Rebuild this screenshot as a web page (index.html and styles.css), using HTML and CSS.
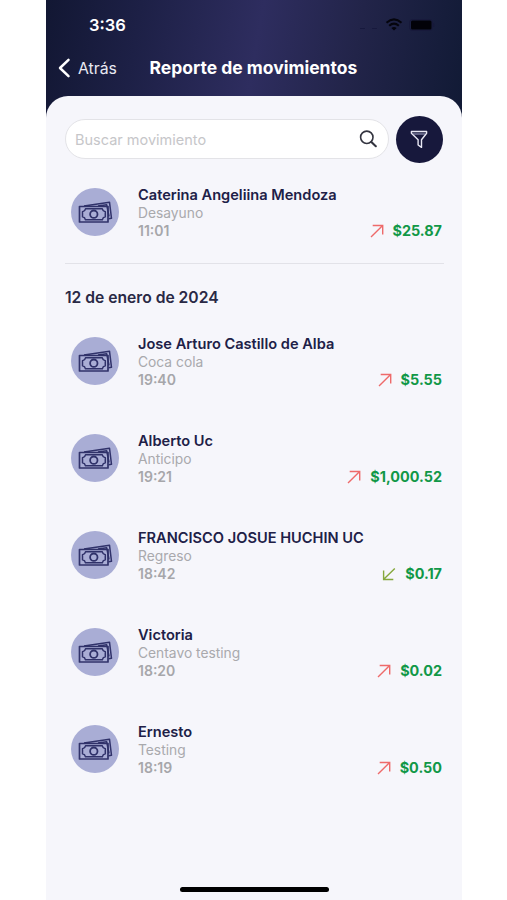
FILE: index.html
```
<!DOCTYPE html>
<html lang="es">
<head>
<meta charset="utf-8">
<title>Reporte de movimientos</title>
<link rel="stylesheet" href="styles.css">
</head>
<body>
<svg class="symbols" aria-hidden="true">
  <symbol id="cash" viewBox="0 0 48 48">
    <g fill="none" stroke="#30326a" stroke-width="1.5" stroke-linejoin="round">
      <path d="M13 18 38.5 14.2 40.5 30.3 37.5 30.8M27 18 35.7 16.8 38 28.5"/>
      <rect x="8.5" y="18.5" width="28.5" height="15.5" stroke-width="1.7"/>
      <path d="M14.5 20.8h16.8q.5 2.5 3 3v5q-2.5.5-3 3H14.5q-.5-2.5-3-3v-5q2.5-.5 3-3z"/>
      <circle cx="22.8" cy="26.2" r="3.7" stroke-width="1.8"/>
    </g>
  </symbol>
  <symbol id="out" viewBox="0 0 14 14"><path d="M1 13 12.4 1.7M2.7 1.5h10v9" fill="none" stroke="#ee6a6a" stroke-width="1.4"/></symbol>
  <symbol id="in" viewBox="0 0 14 14"><path d="M12.8 1.5 2 12M1.6 3.5v9h9.7" fill="none" stroke="#85a83c" stroke-width="1.4"/></symbol>
</svg>
<div class="phone">
  <header class="header">
    <div class="status">
      <span class="clock">3:36</span>
      <div class="indicators">
        <span class="dots"><i></i><i></i></span>
        <svg width="18" height="13" viewBox="0 0 18 13"><g fill="none" stroke="#05050d" stroke-width="2.1"><path d="M1.5 4.7q7.5-6.5 15 0M4.2 7.7q4.8-4 9.6 0"/></g><path d="M9 12.5 6.4 9.9q2.6-2 5.2 0z" fill="#05050d"/></svg>
        <svg width="26" height="12" viewBox="0 0 26 12"><rect x=".5" y=".5" width="23" height="11" rx="3" fill="none" stroke="#17193b"/><rect x="2" y="1.5" width="20.5" height="9" rx="1.5" fill="#020208"/><path d="M24.7 4v4" stroke="#17193b"/></svg>
      </div>
    </div>
    <nav class="nav">
      <svg width="13" height="20" viewBox="0 0 13 20"><path d="M10.5 1.8 2 10 10.5 18.2" fill="none" stroke="#fff" stroke-width="2.5" stroke-linecap="round" stroke-linejoin="round"/></svg>
      <span class="back">Atrás</span>
      <h1 class="title">Reporte de movimientos</h1>
    </nav>
  </header>
  <main class="sheet">
    <div class="tools">
      <div class="search"><span>Buscar movimiento</span>
        <svg width="18" height="18" viewBox="0 0 18 18"><g fill="none" stroke="#33343f"><circle cx="7.8" cy="7.3" r="6.2" stroke-width="1.6"/><path d="m12.4 12 4.4 4.2" stroke-width="2.1" stroke-linecap="round"/></g></svg>
      </div>
      <div class="filter"><svg width="18" height="19" viewBox="0 0 18 19"><path d="M1.4 1.5h15.2v1.8l-5.1 6.5v7.6l-3.4-2.4v-5.2L1.4 3.3z" fill="none" stroke="#e8e8f4" stroke-width="1.4" stroke-linejoin="round"/><path d="M3 4h12" stroke="#a9aaca"/></svg></div>
    </div>
    <section class="today">
      <article class="row"><svg class="avatar"><use href="#cash"/></svg><div class="info"><b>Caterina Angeliina Mendoza</b><span>Desayuno</span><div class="line"><time>11:01</time><svg class="arrow"><use href="#out"/></svg><strong>$25.87</strong></div></div></article>
    </section>
    <h2 class="date">12 de enero de 2024</h2>
    <section class="list">
      <article class="row"><svg class="avatar"><use href="#cash"/></svg><div class="info"><b>Jose Arturo Castillo de Alba</b><span>Coca cola</span><div class="line"><time>19:40</time><svg class="arrow"><use href="#out"/></svg><strong>$5.55</strong></div></div></article>
      <article class="row"><svg class="avatar"><use href="#cash"/></svg><div class="info"><b>Alberto Uc</b><span>Anticipo</span><div class="line"><time>19:21</time><svg class="arrow"><use href="#out"/></svg><strong>$1,000.52</strong></div></div></article>
      <article class="row"><svg class="avatar"><use href="#cash"/></svg><div class="info"><b>FRANCISCO JOSUE HUCHIN UC</b><span>Regreso</span><div class="line"><time>18:42</time><svg class="arrow"><use href="#in"/></svg><strong>$0.17</strong></div></div></article>
      <article class="row"><svg class="avatar"><use href="#cash"/></svg><div class="info"><b>Victoria</b><span>Centavo testing</span><div class="line"><time>18:20</time><svg class="arrow"><use href="#out"/></svg><strong>$0.02</strong></div></div></article>
      <article class="row"><svg class="avatar"><use href="#cash"/></svg><div class="info"><b>Ernesto</b><span>Testing</span><div class="line"><time>18:19</time><svg class="arrow"><use href="#out"/></svg><strong>$0.50</strong></div></div></article>
    </section>
    <div class="home"></div>
  </main>
</div>
</body>
</html>
```
FILE: styles.css
```
* { box-sizing: border-box; }
body { margin: 0; background: #fff; font-family: Inter, "Liberation Sans", sans-serif; }
svg { display: block; flex: none; }
.symbols { position: absolute; width: 0; height: 0; }
.phone {
  width: 416px; height: 900px; margin-left: 46px; overflow: hidden;
  display: flex; flex-direction: column;
  background: linear-gradient(100deg, #121733 0%, #1d2046 22%, #2e2d5f 50%, #222449 73%, #111a35 100%) 0 0 / 100% 118px no-repeat, #f9f9fc;
}
.header { height: 96px; flex: none; }
.status { height: 48px; padding: 1px 27px 0 43px; display: flex; align-items: center; justify-content: space-between; color: #fff; }
.clock { font-size: 16.5px; font-weight: 600; line-height: 20px; }
.indicators { display: flex; align-items: center; gap: 6px; }
.dots { display: flex; gap: 7px; margin: 8px 2px 0 0; }
.dots i { width: 5px; height: 1px; background: #17193d; }
.nav { height: 40px; padding-left: 12px; display: flex; align-items: center; color: #fff; }
.back { margin-left: 7px; padding-top: 1px; width: 71.5px; font-size: 15.8px; line-height: 20px; color: #e9e9f3; }
.title { margin: 0; font-size: 17.5px; line-height: 20px; font-weight: 700; white-space: nowrap; }
.sheet { flex: 1; display: flex; flex-direction: column; background: #f6f6fb; border-radius: 22px 22px 0 0; padding: 19px 17px 8px 19px; }
.tools { display: flex; align-items: center; justify-content: space-between; height: 48px; }
.search { width: 324px; height: 40px; border: 1px solid #e3e3e7; border-radius: 20px; background: #fff; display: flex; align-items: center; justify-content: space-between; padding: 0 11px 0 9px; font-size: 14.5px; color: #c6c6c9; }
.filter { width: 47px; height: 47px; margin-right: 2px; padding-right: 1px; border-radius: 50%; background: #17183c; display: flex; align-items: center; justify-content: center; }
.today { height: 101px; margin-right: 1px; padding-top: 22px; border-bottom: 1px solid #e2e2e8; }
.row { display: flex; align-items: center; height: 54px; padding: 0 2px 0 6px; }
.avatar { width: 48px; height: 48px; border-radius: 50%; background: #a9add5; }
.info { flex: 1; margin-left: 19px; display: flex; flex-direction: column; }
.info b { font-size: 14.6px; font-weight: 600; line-height: 20px; color: #202047; white-space: nowrap; }
.info span { font-size: 13.8px; line-height: 17px; color: #a9a9ad; }
.line { display: flex; align-items: center; height: 17px; }
.line time { flex: 1; font-size: 14px; font-weight: 600; color: #a6a6aa; }
.line strong { margin-left: 9px; font-size: 14.4px; font-weight: 700; color: #119847; }
.arrow { width: 14px; height: 14px; }
.date { margin: 24px 0 26px; font-size: 15.65px; line-height: 20px; font-weight: 600; color: #292945; }
.list { display: flex; flex-direction: column; gap: 43px; }
.list .row { padding-right: 3px; }
.home { width: 149px; height: 5px; border-radius: 3px; background: #000; margin: auto 0 0 115px; }
```
